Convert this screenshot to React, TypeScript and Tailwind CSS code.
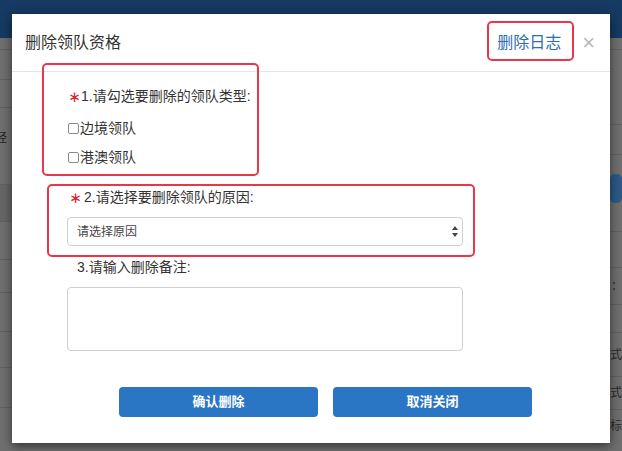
const leftRows = [12, 30, 28, 77, 37, 38, 33, 39, 36, 40];
const rightRows = [12, 75, 30, 77, 36, 37, 28, 44, 33];

const Checkbox = ({ label }: { label: string }) => (
  <label className="flex items-center h-[20px] text-[14px] text-[#333]">
    <input
      type="checkbox"
      className="appearance-none w-[11px] h-[11px] border border-[#8a8a8a] rounded-[2px] bg-white mr-[1px]"
    />
    {label}
  </label>
);

const Star = () => (
  <span className="flex justify-center w-[11px] mr-[1px] pt-[3px] text-[15px] leading-none text-[#d9232d] [font-family:'DejaVu_Sans',sans-serif]">
    ∗
  </span>
);

const App = () => {
  return (
    <div className="relative w-[622px] h-[451px] overflow-hidden bg-[#6f6f6f] [font-family:'Liberation_Sans','Noto_Sans_CJK_SC',sans-serif]">
      {/* page behind the dialog */}
      <div className="h-[38px] bg-[#163a63]" />
      <div className="flex justify-between">
        <div className="w-[14px] flex flex-col">
          {leftRows.map((h, i) => (
            <div
              key={i}
              style={{ height: h }}
              className={`border-b border-[#626262] text-[12px] text-[#222] leading-none ${i === 3 ? "pt-[24px]" : ""} ${i === 4 ? "bg-[#666]" : ""}`}
            >
              {i === 3 ? <span className="-ml-[5px]">经</span> : null}
            </div>
          ))}
        </div>
        <div className="w-[12px] flex flex-col">
          {rightRows.map((h, i) => (
            <div
              key={i}
              style={{ height: h }}
              className="border-b border-[#626262] text-[12px] text-[#2a2a2a] leading-none flex items-center"
            >
              {i === 3 ? (
                <div className="w-[20px] h-[29px] rounded-[5px] bg-[#2c5a86] mt-[-10px]" />
              ) : null}
              {i === 5 ? <span className="pl-[1px]">：</span> : null}
              {i === 7 ? <span>式</span> : null}
              {i === 8 ? <span>式</span> : null}
            </div>
          ))}
          <div className="h-[32px] text-[12px] text-[#2a2a2a] flex items-center">标</div>
        </div>
      </div>

      {/* dialog */}
      <div className="absolute left-[12px] top-[14px] w-[598px] h-[429px] bg-white shadow-[0_3px_10px_rgba(0,0,0,0.55)]">
        <div className="flex items-center h-[58px] border-b border-[#e5e5e5] pl-[13px] pr-[15px]">
          <h4 className="text-[16px] text-[#333]">删除领队资格</h4>
          <a className="ml-auto text-[16px] text-[#2f6db3]">删除日志</a>
          <span className="ml-[21px] text-[22px] leading-none text-[#b8b8b8] font-light">×</span>
        </div>

        <div className="flex flex-col pl-[56px] pt-[14px] text-[14px] text-[#333]">
          <div className="flex items-center h-[20px] pl-[1px]">
            <Star />
            <span>1.请勾选要删除的领队类型:</span>
          </div>
          <div className="mt-[12px]">
            <Checkbox label="边境领队" />
          </div>
          <div className="mt-[9px]">
            <Checkbox label="港澳领队" />
          </div>

          <div className="flex items-center h-[20px] mt-[20px] pl-[2px]">
            <Star />
            <span className="pl-[2px]">2.请选择要删除领队的原因:</span>
          </div>
          <div className="relative mt-[10px] w-[396px] -ml-[1px]">
            <select className="appearance-none w-full h-[29px] border border-[#cfcfcf] rounded-[4px] pl-[9px] text-[12px] text-[#444] bg-white">
              <option>请选择原因</option>
            </select>
            <svg
              className="absolute right-[5px] top-[9px]"
              width="6"
              height="11"
              viewBox="0 0 6 11"
            >
              <path d="M3 0 L6 4 L0 4 Z" fill="#444" />
              <path d="M3 11 L6 7 L0 7 Z" fill="#444" />
            </svg>
          </div>

          <div className="h-[20px] leading-[20px] mt-[11px] pl-[9px]">3.请输入删除备注:</div>
          <textarea className="mt-[10px] w-[396px] h-[64px] -ml-[1px] border border-[#cfcfcf] rounded-[4px] resize-none" />
        </div>

        <div className="flex gap-[15px] pl-[107px] mt-[36px]">
          <button className="w-[199px] h-[30px] rounded-[4px] bg-[#2b76c4] text-white text-[13px] font-bold">
            确认删除
          </button>
          <button className="w-[199px] h-[30px] rounded-[4px] bg-[#2b76c4] text-white text-[13px] font-bold">
            取消关闭
          </button>
        </div>

        {/* red annotation frames */}
        <div className="absolute left-[30px] top-[49px] w-[217px] h-[113px] border-2 border-[#e8364b] rounded-[5px]" />
        <div className="absolute left-[35px] top-[170px] w-[428px] h-[73px] border-2 border-[#e8364b] rounded-[5px]" />
        <div className="absolute left-[475px] top-[7px] w-[87px] h-[40px] border-2 border-[#e8364b] rounded-[5px]" />
      </div>
    </div>
  );
};

export default App;
